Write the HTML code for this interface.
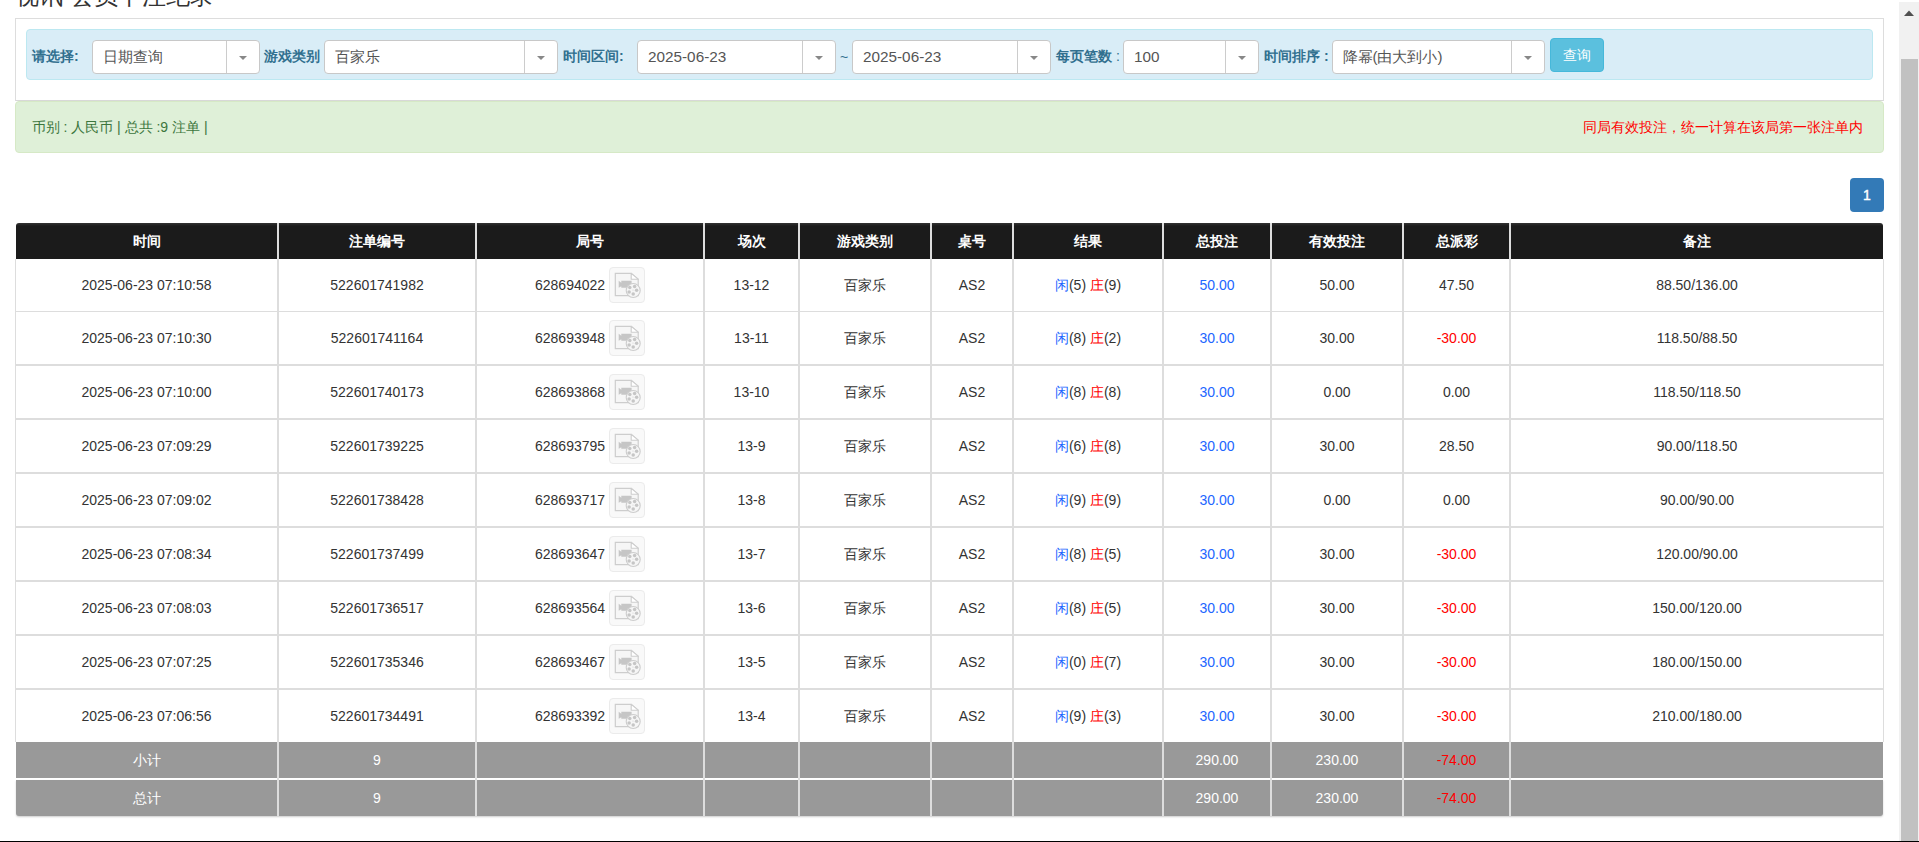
<!DOCTYPE html><html><head><meta charset="utf-8"><style>
*{box-sizing:border-box;margin:0;padding:0}
html,body{width:1919px;height:842px;overflow:hidden;background:#fff;font-family:"Liberation Sans",sans-serif;color:#333;font-size:14px}
.abs{position:absolute}
.title{position:absolute;left:15px;top:-17px;font-size:24px;line-height:26px;color:#333;white-space:nowrap}
.outer{position:absolute;left:15px;top:18px;width:1869px;height:83px;border:1px solid #ddd;border-bottom-color:#d8d8d8}
.info{position:absolute;left:26px;top:29px;width:1847px;height:51px;background:#d9edf7;border:1px solid #bce8f1;border-radius:4px}
.lbl{position:absolute;top:48px;font-size:14px;line-height:17px;font-weight:bold;color:#31708f;white-space:nowrap}
.sel{position:absolute;top:40px;height:34px;background:#fff;border:1px solid #c8c8c8;border-radius:4px}
.sel .t{position:absolute;left:9.5px;top:7px;font-size:15px;line-height:18px;color:#555;white-space:nowrap}
.sel .d{position:absolute;top:0;bottom:0;width:1px;background:#ccc}
.sel .ar{position:absolute;top:14.5px;width:0;height:0;border-left:4px solid transparent;border-right:4px solid transparent;border-top:4.5px solid #888}
.btn{position:absolute;left:1550px;top:38px;width:54px;height:34px;background:#5bc0de;border:1px solid #46b8da;border-radius:4px;color:#fff;font-size:14px;line-height:32px;text-align:center}
.ok{position:absolute;left:15px;top:101px;width:1869px;height:52px;background:#dff0d8;border:1px solid #d6e9c6;border-radius:4px}
.okt{position:absolute;left:31.5px;top:118.5px;color:#3c763d;font-size:14px;line-height:17px;white-space:nowrap}
.warn{position:absolute;left:1583px;top:119px;color:#f00;font-size:14px;line-height:17px;white-space:nowrap}
.pg{position:absolute;left:1850px;top:178px;width:34px;height:34px;background:#337ab7;border-radius:4px;color:#fff;font-size:14px;line-height:34px;text-align:center;-webkit-text-stroke:0.4px #fff}
.hd{position:absolute;left:16px;top:223px;width:1867px;height:36px;background:linear-gradient(#333 0,#1b1b1b 3px,#1b1b1b 100%);border-radius:3px 3px 0 0}
.ht{position:absolute;top:233px;color:#fff;font-weight:bold;font-size:14px;line-height:17px;text-align:center;white-space:nowrap}
.vl{position:absolute;width:2px;background:#ddd}
.hl{position:absolute;left:15px;width:1869px;background:#ddd}
.c{position:absolute;text-align:center;white-space:nowrap;font-size:14px;line-height:17px}
.ico{position:absolute;width:36px;height:35.5px;background:#f9f9f9;border:1px solid #ebebeb;border-radius:4px}
.ico svg{position:absolute;left:-1px;top:-1px}
.b{color:#2266ff}.r{color:#f00}
.ft{position:absolute;left:16px;width:1867px;background:#999}
.sb{position:absolute;left:1899px;top:2px;width:20px;height:840px;background:#f1f1f1}
.th{position:absolute;left:1901px;top:59px;width:17px;height:783px;background:#c1c1c1}
</style></head><body>

<div class="title">视讯 会员下注纪录</div>
<div class="outer"></div><div class="info"></div>
<div class="lbl" style="left:32px">请选择:</div>
<div class="sel" style="left:92px;width:168px"><div class="t" style="left:9.5px;">日期查询</div><div class="d" style="left:133px"></div><div class="ar" style="left:146.0px"></div></div>
<div class="lbl" style="left:264px">游戏类别</div>
<div class="sel" style="left:324px;width:234px"><div class="t" style="left:9.5px;">百家乐</div><div class="d" style="left:199px"></div><div class="ar" style="left:212.0px"></div></div>
<div class="lbl" style="left:563px">时间区间:</div>
<div class="sel" style="left:637px;width:199px"><div class="t" style="left:10px;font-size:15.3px">2025-06-23</div><div class="d" style="left:164px"></div><div class="ar" style="left:177.0px"></div></div>
<div class="c" style="left:840px;top:49px;color:#31708f">~</div>
<div class="sel" style="left:852px;width:199px"><div class="t" style="left:10px;font-size:15.3px">2025-06-23</div><div class="d" style="left:164px"></div><div class="ar" style="left:177.0px"></div></div>
<div class="lbl" style="left:1056px">每页笔数<span style="font-weight:normal"> :</span></div>
<div class="sel" style="left:1123px;width:136px"><div class="t" style="left:10px;font-size:15.3px">100</div><div class="d" style="left:101px"></div><div class="ar" style="left:114.0px"></div></div>
<div class="lbl" style="left:1264px">时间排序 :</div>
<div class="sel" style="left:1332px;width:213px"><div class="t" style="left:9.5px;">降幂(由大到小)</div><div class="d" style="left:178px"></div><div class="ar" style="left:191.0px"></div></div>
<div class="btn">查询</div>
<div class="ok"></div><div class="okt">币别 : 人民币 | 总共 :9 注单 |</div><div class="warn">同局有效投注，统一计算在该局第一张注单内</div>
<div class="pg">1</div>
<div class="hd"></div>
<div class="ht" style="left:16px;width:261px">时间</div>
<div class="ht" style="left:279px;width:196px">注单编号</div>
<div class="ht" style="left:477px;width:226px">局号</div>
<div class="ht" style="left:705px;width:93px">场次</div>
<div class="ht" style="left:800px;width:130px">游戏类别</div>
<div class="ht" style="left:932px;width:80px">桌号</div>
<div class="ht" style="left:1014px;width:148px">结果</div>
<div class="ht" style="left:1164px;width:106px">总投注</div>
<div class="ht" style="left:1272px;width:130px">有效投注</div>
<div class="ht" style="left:1404px;width:105px">总派彩</div>
<div class="ht" style="left:1511px;width:372px">备注</div>
<div class="vl" style="left:15px;width:1px;top:259px;height:483px"></div>
<div class="vl" style="left:1883px;width:1px;top:259px;height:483px"></div>
<div class="vl" style="left:277px;top:223px;height:593px"></div>
<div class="vl" style="left:475px;top:223px;height:593px"></div>
<div class="vl" style="left:703px;top:223px;height:593px"></div>
<div class="vl" style="left:798px;top:223px;height:593px"></div>
<div class="vl" style="left:930px;top:223px;height:593px"></div>
<div class="vl" style="left:1012px;top:223px;height:593px"></div>
<div class="vl" style="left:1162px;top:223px;height:593px"></div>
<div class="vl" style="left:1270px;top:223px;height:593px"></div>
<div class="vl" style="left:1402px;top:223px;height:593px"></div>
<div class="vl" style="left:1509px;top:223px;height:593px"></div>
<div class="hl" style="top:310.5px;height:1.5px"></div>
<div class="hl" style="top:364.0px;height:1.5px"></div>
<div class="hl" style="top:418.0px;height:1.5px"></div>
<div class="hl" style="top:472.0px;height:1.5px"></div>
<div class="hl" style="top:526.0px;height:1.5px"></div>
<div class="hl" style="top:580.0px;height:1.5px"></div>
<div class="hl" style="top:634.0px;height:1.5px"></div>
<div class="hl" style="top:688.0px;height:1.5px"></div>
<div class="c" style="left:16px;width:261px;top:276.5px">2025-06-23 07:10:58</div>
<div class="c" style="left:279px;width:196px;top:276.5px">522601741982</div>
<div class="c" style="left:535px;top:276.5px">628694022</div>
<div class="ico" style="left:609px;top:267px"><svg width="36" height="36" viewBox="0 0 36 36"><path d="M6.3 6.3h15.9l7 6v16.3h-22.9z" fill="#f6f6f6" stroke="#cdcdcd" stroke-width="1.2"/><path d="M22.2 6.3v5.9h7z" fill="#fff" stroke="#cdcdcd" stroke-width="1.1" stroke-linejoin="round"/><path d="M9.7 13.8l2.6 1.9v-1.9h10.3v7h-10.3v-1.6l-2.6 1.6z" fill="#c6c6c6"/><circle cx="24.2" cy="23.5" r="7" fill="#f6f6f6" stroke="#cdcdcd" stroke-width="1.1"/><circle cx="20.8" cy="20.4" r="1.75" fill="#c6c6c6"/><circle cx="25.6" cy="19.5" r="1.75" fill="#c6c6c6"/><circle cx="27.6" cy="23.3" r="1.75" fill="#c6c6c6"/><circle cx="24.2" cy="26.9" r="1.75" fill="#c6c6c6"/><circle cx="20.1" cy="24.9" r="1.75" fill="#c6c6c6"/><circle cx="24" cy="23.1" r="0.5" fill="#c8c8c8"/></svg></div>
<div class="c" style="left:705px;width:93px;top:276.5px">13-12</div>
<div class="c" style="left:800px;width:130px;top:276.5px">百家乐</div>
<div class="c" style="left:932px;width:80px;top:276.5px">AS2</div>
<div class="c" style="left:1014px;width:148px;top:276.5px"><span class="b">闲</span>(5) <span class="r">庄</span>(9)</div>
<div class="c" style="left:1164px;width:106px;top:276.5px"><span class="b">50.00</span></div>
<div class="c" style="left:1272px;width:130px;top:276.5px">50.00</div>
<div class="c" style="left:1404px;width:105px;top:276.5px">47.50</div>
<div class="c" style="left:1511px;width:372px;top:276.5px">88.50/136.00</div>
<div class="c" style="left:16px;width:261px;top:330.25px">2025-06-23 07:10:30</div>
<div class="c" style="left:279px;width:196px;top:330.25px">522601741164</div>
<div class="c" style="left:535px;top:330.25px">628693948</div>
<div class="ico" style="left:609px;top:320px"><svg width="36" height="36" viewBox="0 0 36 36"><path d="M6.3 6.3h15.9l7 6v16.3h-22.9z" fill="#f6f6f6" stroke="#cdcdcd" stroke-width="1.2"/><path d="M22.2 6.3v5.9h7z" fill="#fff" stroke="#cdcdcd" stroke-width="1.1" stroke-linejoin="round"/><path d="M9.7 13.8l2.6 1.9v-1.9h10.3v7h-10.3v-1.6l-2.6 1.6z" fill="#c6c6c6"/><circle cx="24.2" cy="23.5" r="7" fill="#f6f6f6" stroke="#cdcdcd" stroke-width="1.1"/><circle cx="20.8" cy="20.4" r="1.75" fill="#c6c6c6"/><circle cx="25.6" cy="19.5" r="1.75" fill="#c6c6c6"/><circle cx="27.6" cy="23.3" r="1.75" fill="#c6c6c6"/><circle cx="24.2" cy="26.9" r="1.75" fill="#c6c6c6"/><circle cx="20.1" cy="24.9" r="1.75" fill="#c6c6c6"/><circle cx="24" cy="23.1" r="0.5" fill="#c8c8c8"/></svg></div>
<div class="c" style="left:705px;width:93px;top:330.25px">13-11</div>
<div class="c" style="left:800px;width:130px;top:330.25px">百家乐</div>
<div class="c" style="left:932px;width:80px;top:330.25px">AS2</div>
<div class="c" style="left:1014px;width:148px;top:330.25px"><span class="b">闲</span>(8) <span class="r">庄</span>(2)</div>
<div class="c" style="left:1164px;width:106px;top:330.25px"><span class="b">30.00</span></div>
<div class="c" style="left:1272px;width:130px;top:330.25px">30.00</div>
<div class="c" style="left:1404px;width:105px;top:330.25px"><span class="r">-30.00</span></div>
<div class="c" style="left:1511px;width:372px;top:330.25px">118.50/88.50</div>
<div class="c" style="left:16px;width:261px;top:384.0px">2025-06-23 07:10:00</div>
<div class="c" style="left:279px;width:196px;top:384.0px">522601740173</div>
<div class="c" style="left:535px;top:384.0px">628693868</div>
<div class="ico" style="left:609px;top:374px"><svg width="36" height="36" viewBox="0 0 36 36"><path d="M6.3 6.3h15.9l7 6v16.3h-22.9z" fill="#f6f6f6" stroke="#cdcdcd" stroke-width="1.2"/><path d="M22.2 6.3v5.9h7z" fill="#fff" stroke="#cdcdcd" stroke-width="1.1" stroke-linejoin="round"/><path d="M9.7 13.8l2.6 1.9v-1.9h10.3v7h-10.3v-1.6l-2.6 1.6z" fill="#c6c6c6"/><circle cx="24.2" cy="23.5" r="7" fill="#f6f6f6" stroke="#cdcdcd" stroke-width="1.1"/><circle cx="20.8" cy="20.4" r="1.75" fill="#c6c6c6"/><circle cx="25.6" cy="19.5" r="1.75" fill="#c6c6c6"/><circle cx="27.6" cy="23.3" r="1.75" fill="#c6c6c6"/><circle cx="24.2" cy="26.9" r="1.75" fill="#c6c6c6"/><circle cx="20.1" cy="24.9" r="1.75" fill="#c6c6c6"/><circle cx="24" cy="23.1" r="0.5" fill="#c8c8c8"/></svg></div>
<div class="c" style="left:705px;width:93px;top:384.0px">13-10</div>
<div class="c" style="left:800px;width:130px;top:384.0px">百家乐</div>
<div class="c" style="left:932px;width:80px;top:384.0px">AS2</div>
<div class="c" style="left:1014px;width:148px;top:384.0px"><span class="b">闲</span>(8) <span class="r">庄</span>(8)</div>
<div class="c" style="left:1164px;width:106px;top:384.0px"><span class="b">30.00</span></div>
<div class="c" style="left:1272px;width:130px;top:384.0px">0.00</div>
<div class="c" style="left:1404px;width:105px;top:384.0px">0.00</div>
<div class="c" style="left:1511px;width:372px;top:384.0px">118.50/118.50</div>
<div class="c" style="left:16px;width:261px;top:438.0px">2025-06-23 07:09:29</div>
<div class="c" style="left:279px;width:196px;top:438.0px">522601739225</div>
<div class="c" style="left:535px;top:438.0px">628693795</div>
<div class="ico" style="left:609px;top:428px"><svg width="36" height="36" viewBox="0 0 36 36"><path d="M6.3 6.3h15.9l7 6v16.3h-22.9z" fill="#f6f6f6" stroke="#cdcdcd" stroke-width="1.2"/><path d="M22.2 6.3v5.9h7z" fill="#fff" stroke="#cdcdcd" stroke-width="1.1" stroke-linejoin="round"/><path d="M9.7 13.8l2.6 1.9v-1.9h10.3v7h-10.3v-1.6l-2.6 1.6z" fill="#c6c6c6"/><circle cx="24.2" cy="23.5" r="7" fill="#f6f6f6" stroke="#cdcdcd" stroke-width="1.1"/><circle cx="20.8" cy="20.4" r="1.75" fill="#c6c6c6"/><circle cx="25.6" cy="19.5" r="1.75" fill="#c6c6c6"/><circle cx="27.6" cy="23.3" r="1.75" fill="#c6c6c6"/><circle cx="24.2" cy="26.9" r="1.75" fill="#c6c6c6"/><circle cx="20.1" cy="24.9" r="1.75" fill="#c6c6c6"/><circle cx="24" cy="23.1" r="0.5" fill="#c8c8c8"/></svg></div>
<div class="c" style="left:705px;width:93px;top:438.0px">13-9</div>
<div class="c" style="left:800px;width:130px;top:438.0px">百家乐</div>
<div class="c" style="left:932px;width:80px;top:438.0px">AS2</div>
<div class="c" style="left:1014px;width:148px;top:438.0px"><span class="b">闲</span>(6) <span class="r">庄</span>(8)</div>
<div class="c" style="left:1164px;width:106px;top:438.0px"><span class="b">30.00</span></div>
<div class="c" style="left:1272px;width:130px;top:438.0px">30.00</div>
<div class="c" style="left:1404px;width:105px;top:438.0px">28.50</div>
<div class="c" style="left:1511px;width:372px;top:438.0px">90.00/118.50</div>
<div class="c" style="left:16px;width:261px;top:492.0px">2025-06-23 07:09:02</div>
<div class="c" style="left:279px;width:196px;top:492.0px">522601738428</div>
<div class="c" style="left:535px;top:492.0px">628693717</div>
<div class="ico" style="left:609px;top:482px"><svg width="36" height="36" viewBox="0 0 36 36"><path d="M6.3 6.3h15.9l7 6v16.3h-22.9z" fill="#f6f6f6" stroke="#cdcdcd" stroke-width="1.2"/><path d="M22.2 6.3v5.9h7z" fill="#fff" stroke="#cdcdcd" stroke-width="1.1" stroke-linejoin="round"/><path d="M9.7 13.8l2.6 1.9v-1.9h10.3v7h-10.3v-1.6l-2.6 1.6z" fill="#c6c6c6"/><circle cx="24.2" cy="23.5" r="7" fill="#f6f6f6" stroke="#cdcdcd" stroke-width="1.1"/><circle cx="20.8" cy="20.4" r="1.75" fill="#c6c6c6"/><circle cx="25.6" cy="19.5" r="1.75" fill="#c6c6c6"/><circle cx="27.6" cy="23.3" r="1.75" fill="#c6c6c6"/><circle cx="24.2" cy="26.9" r="1.75" fill="#c6c6c6"/><circle cx="20.1" cy="24.9" r="1.75" fill="#c6c6c6"/><circle cx="24" cy="23.1" r="0.5" fill="#c8c8c8"/></svg></div>
<div class="c" style="left:705px;width:93px;top:492.0px">13-8</div>
<div class="c" style="left:800px;width:130px;top:492.0px">百家乐</div>
<div class="c" style="left:932px;width:80px;top:492.0px">AS2</div>
<div class="c" style="left:1014px;width:148px;top:492.0px"><span class="b">闲</span>(9) <span class="r">庄</span>(9)</div>
<div class="c" style="left:1164px;width:106px;top:492.0px"><span class="b">30.00</span></div>
<div class="c" style="left:1272px;width:130px;top:492.0px">0.00</div>
<div class="c" style="left:1404px;width:105px;top:492.0px">0.00</div>
<div class="c" style="left:1511px;width:372px;top:492.0px">90.00/90.00</div>
<div class="c" style="left:16px;width:261px;top:546.0px">2025-06-23 07:08:34</div>
<div class="c" style="left:279px;width:196px;top:546.0px">522601737499</div>
<div class="c" style="left:535px;top:546.0px">628693647</div>
<div class="ico" style="left:609px;top:536px"><svg width="36" height="36" viewBox="0 0 36 36"><path d="M6.3 6.3h15.9l7 6v16.3h-22.9z" fill="#f6f6f6" stroke="#cdcdcd" stroke-width="1.2"/><path d="M22.2 6.3v5.9h7z" fill="#fff" stroke="#cdcdcd" stroke-width="1.1" stroke-linejoin="round"/><path d="M9.7 13.8l2.6 1.9v-1.9h10.3v7h-10.3v-1.6l-2.6 1.6z" fill="#c6c6c6"/><circle cx="24.2" cy="23.5" r="7" fill="#f6f6f6" stroke="#cdcdcd" stroke-width="1.1"/><circle cx="20.8" cy="20.4" r="1.75" fill="#c6c6c6"/><circle cx="25.6" cy="19.5" r="1.75" fill="#c6c6c6"/><circle cx="27.6" cy="23.3" r="1.75" fill="#c6c6c6"/><circle cx="24.2" cy="26.9" r="1.75" fill="#c6c6c6"/><circle cx="20.1" cy="24.9" r="1.75" fill="#c6c6c6"/><circle cx="24" cy="23.1" r="0.5" fill="#c8c8c8"/></svg></div>
<div class="c" style="left:705px;width:93px;top:546.0px">13-7</div>
<div class="c" style="left:800px;width:130px;top:546.0px">百家乐</div>
<div class="c" style="left:932px;width:80px;top:546.0px">AS2</div>
<div class="c" style="left:1014px;width:148px;top:546.0px"><span class="b">闲</span>(8) <span class="r">庄</span>(5)</div>
<div class="c" style="left:1164px;width:106px;top:546.0px"><span class="b">30.00</span></div>
<div class="c" style="left:1272px;width:130px;top:546.0px">30.00</div>
<div class="c" style="left:1404px;width:105px;top:546.0px"><span class="r">-30.00</span></div>
<div class="c" style="left:1511px;width:372px;top:546.0px">120.00/90.00</div>
<div class="c" style="left:16px;width:261px;top:600.0px">2025-06-23 07:08:03</div>
<div class="c" style="left:279px;width:196px;top:600.0px">522601736517</div>
<div class="c" style="left:535px;top:600.0px">628693564</div>
<div class="ico" style="left:609px;top:590px"><svg width="36" height="36" viewBox="0 0 36 36"><path d="M6.3 6.3h15.9l7 6v16.3h-22.9z" fill="#f6f6f6" stroke="#cdcdcd" stroke-width="1.2"/><path d="M22.2 6.3v5.9h7z" fill="#fff" stroke="#cdcdcd" stroke-width="1.1" stroke-linejoin="round"/><path d="M9.7 13.8l2.6 1.9v-1.9h10.3v7h-10.3v-1.6l-2.6 1.6z" fill="#c6c6c6"/><circle cx="24.2" cy="23.5" r="7" fill="#f6f6f6" stroke="#cdcdcd" stroke-width="1.1"/><circle cx="20.8" cy="20.4" r="1.75" fill="#c6c6c6"/><circle cx="25.6" cy="19.5" r="1.75" fill="#c6c6c6"/><circle cx="27.6" cy="23.3" r="1.75" fill="#c6c6c6"/><circle cx="24.2" cy="26.9" r="1.75" fill="#c6c6c6"/><circle cx="20.1" cy="24.9" r="1.75" fill="#c6c6c6"/><circle cx="24" cy="23.1" r="0.5" fill="#c8c8c8"/></svg></div>
<div class="c" style="left:705px;width:93px;top:600.0px">13-6</div>
<div class="c" style="left:800px;width:130px;top:600.0px">百家乐</div>
<div class="c" style="left:932px;width:80px;top:600.0px">AS2</div>
<div class="c" style="left:1014px;width:148px;top:600.0px"><span class="b">闲</span>(8) <span class="r">庄</span>(5)</div>
<div class="c" style="left:1164px;width:106px;top:600.0px"><span class="b">30.00</span></div>
<div class="c" style="left:1272px;width:130px;top:600.0px">30.00</div>
<div class="c" style="left:1404px;width:105px;top:600.0px"><span class="r">-30.00</span></div>
<div class="c" style="left:1511px;width:372px;top:600.0px">150.00/120.00</div>
<div class="c" style="left:16px;width:261px;top:654.0px">2025-06-23 07:07:25</div>
<div class="c" style="left:279px;width:196px;top:654.0px">522601735346</div>
<div class="c" style="left:535px;top:654.0px">628693467</div>
<div class="ico" style="left:609px;top:644px"><svg width="36" height="36" viewBox="0 0 36 36"><path d="M6.3 6.3h15.9l7 6v16.3h-22.9z" fill="#f6f6f6" stroke="#cdcdcd" stroke-width="1.2"/><path d="M22.2 6.3v5.9h7z" fill="#fff" stroke="#cdcdcd" stroke-width="1.1" stroke-linejoin="round"/><path d="M9.7 13.8l2.6 1.9v-1.9h10.3v7h-10.3v-1.6l-2.6 1.6z" fill="#c6c6c6"/><circle cx="24.2" cy="23.5" r="7" fill="#f6f6f6" stroke="#cdcdcd" stroke-width="1.1"/><circle cx="20.8" cy="20.4" r="1.75" fill="#c6c6c6"/><circle cx="25.6" cy="19.5" r="1.75" fill="#c6c6c6"/><circle cx="27.6" cy="23.3" r="1.75" fill="#c6c6c6"/><circle cx="24.2" cy="26.9" r="1.75" fill="#c6c6c6"/><circle cx="20.1" cy="24.9" r="1.75" fill="#c6c6c6"/><circle cx="24" cy="23.1" r="0.5" fill="#c8c8c8"/></svg></div>
<div class="c" style="left:705px;width:93px;top:654.0px">13-5</div>
<div class="c" style="left:800px;width:130px;top:654.0px">百家乐</div>
<div class="c" style="left:932px;width:80px;top:654.0px">AS2</div>
<div class="c" style="left:1014px;width:148px;top:654.0px"><span class="b">闲</span>(0) <span class="r">庄</span>(7)</div>
<div class="c" style="left:1164px;width:106px;top:654.0px"><span class="b">30.00</span></div>
<div class="c" style="left:1272px;width:130px;top:654.0px">30.00</div>
<div class="c" style="left:1404px;width:105px;top:654.0px"><span class="r">-30.00</span></div>
<div class="c" style="left:1511px;width:372px;top:654.0px">180.00/150.00</div>
<div class="c" style="left:16px;width:261px;top:707.75px">2025-06-23 07:06:56</div>
<div class="c" style="left:279px;width:196px;top:707.75px">522601734491</div>
<div class="c" style="left:535px;top:707.75px">628693392</div>
<div class="ico" style="left:609px;top:698px"><svg width="36" height="36" viewBox="0 0 36 36"><path d="M6.3 6.3h15.9l7 6v16.3h-22.9z" fill="#f6f6f6" stroke="#cdcdcd" stroke-width="1.2"/><path d="M22.2 6.3v5.9h7z" fill="#fff" stroke="#cdcdcd" stroke-width="1.1" stroke-linejoin="round"/><path d="M9.7 13.8l2.6 1.9v-1.9h10.3v7h-10.3v-1.6l-2.6 1.6z" fill="#c6c6c6"/><circle cx="24.2" cy="23.5" r="7" fill="#f6f6f6" stroke="#cdcdcd" stroke-width="1.1"/><circle cx="20.8" cy="20.4" r="1.75" fill="#c6c6c6"/><circle cx="25.6" cy="19.5" r="1.75" fill="#c6c6c6"/><circle cx="27.6" cy="23.3" r="1.75" fill="#c6c6c6"/><circle cx="24.2" cy="26.9" r="1.75" fill="#c6c6c6"/><circle cx="20.1" cy="24.9" r="1.75" fill="#c6c6c6"/><circle cx="24" cy="23.1" r="0.5" fill="#c8c8c8"/></svg></div>
<div class="c" style="left:705px;width:93px;top:707.75px">13-4</div>
<div class="c" style="left:800px;width:130px;top:707.75px">百家乐</div>
<div class="c" style="left:932px;width:80px;top:707.75px">AS2</div>
<div class="c" style="left:1014px;width:148px;top:707.75px"><span class="b">闲</span>(9) <span class="r">庄</span>(3)</div>
<div class="c" style="left:1164px;width:106px;top:707.75px"><span class="b">30.00</span></div>
<div class="c" style="left:1272px;width:130px;top:707.75px">30.00</div>
<div class="c" style="left:1404px;width:105px;top:707.75px"><span class="r">-30.00</span></div>
<div class="c" style="left:1511px;width:372px;top:707.75px">210.00/180.00</div>
<div class="ft" style="top:742px;height:36px"></div>
<div class="ft" style="top:779.5px;height:36.5px;border-radius:0 0 3px 3px;box-shadow:0 1px 2px rgba(0,0,0,.2)"></div>
<div class="vl" style="left:277px;top:742px;height:74px"></div>
<div class="vl" style="left:475px;top:742px;height:74px"></div>
<div class="vl" style="left:703px;top:742px;height:74px"></div>
<div class="vl" style="left:798px;top:742px;height:74px"></div>
<div class="vl" style="left:930px;top:742px;height:74px"></div>
<div class="vl" style="left:1012px;top:742px;height:74px"></div>
<div class="vl" style="left:1162px;top:742px;height:74px"></div>
<div class="vl" style="left:1270px;top:742px;height:74px"></div>
<div class="vl" style="left:1402px;top:742px;height:74px"></div>
<div class="vl" style="left:1509px;top:742px;height:74px"></div>
<div class="c" style="left:16px;width:261px;top:751.5px;color:#fff">小计</div>
<div class="c" style="left:279px;width:196px;top:751.5px;color:#fff">9</div>
<div class="c" style="left:1164px;width:106px;top:751.5px;color:#fff">290.00</div>
<div class="c" style="left:1272px;width:130px;top:751.5px;color:#fff">230.00</div>
<div class="c" style="left:1404px;width:105px;top:751.5px;color:#fff"><span class="r">-74.00</span></div>
<div class="c" style="left:16px;width:261px;top:790.25px;color:#fff">总计</div>
<div class="c" style="left:279px;width:196px;top:790.25px;color:#fff">9</div>
<div class="c" style="left:1164px;width:106px;top:790.25px;color:#fff">290.00</div>
<div class="c" style="left:1272px;width:130px;top:790.25px;color:#fff">230.00</div>
<div class="c" style="left:1404px;width:105px;top:790.25px;color:#fff"><span class="r">-74.00</span></div>
<div class="sb"><svg class="abs" style="left:5px;top:8px" width="10" height="6"><path d="M0 6L5 0.5 10 6z" fill="#505050"/></svg></div><div class="th"></div>
<div class="abs" style="left:0;top:841px;width:1919px;height:1px;background:#000"></div>
</body></html>
